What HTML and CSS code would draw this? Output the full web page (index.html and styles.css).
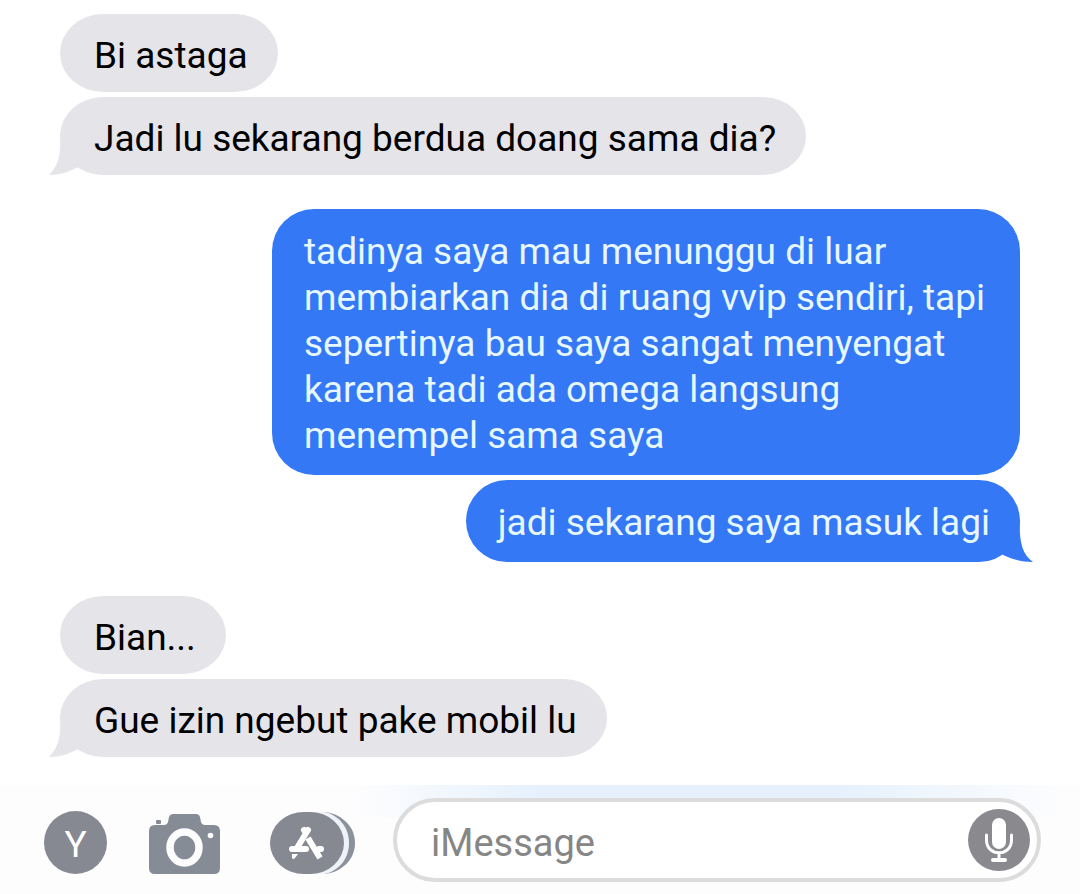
FILE: index.html
```html
<!DOCTYPE html>
<html lang="id">
<head>
  <meta charset="UTF-8" />
  <meta name="viewport" content="width=device-width, initial-scale=1.0"/>
  <title>iMessage</title>
  <link rel="stylesheet" href="styles.css">
</head>
<body>
  <main class="chat">
    <div class="group received">
      <p class="bubble">Bi astaga</p>
      <p class="bubble">Jadi lu sekarang berdua doang sama dia?
        <svg class="tail" viewBox="0 0 40 42" aria-hidden="true"><path d="M11 0C12 18 11 31 0 42C11 42 20 39 29 34L40 20V0Z"/></svg>
      </p>
    </div>

    <div class="group sent">
      <p class="bubble long">tadinya saya mau menunggu di luar membiarkan dia di ruang vvip sendiri, tapi sepertinya bau saya sangat menyengat karena tadi ada omega langsung menempel sama saya</p>
      <p class="bubble">jadi sekarang saya masuk lagi
        <svg class="tail" viewBox="0 0 40 42" aria-hidden="true"><path d="M27 0C26 18 28 34 40 42C28 42 19 39 10 35L0 20V0Z"/></svg>
      </p>
    </div>

    <div class="group received">
      <p class="bubble">Bian...</p>
      <p class="bubble">Gue izin ngebut pake mobil lu
        <svg class="tail" viewBox="0 0 40 42" aria-hidden="true"><path d="M11 0C12 18 11 31 0 42C11 42 20 39 29 34L40 20V0Z"/></svg>
      </p>
    </div>
  </main>

  <footer class="toolbar">
    <button class="avatar" type="button">Y</button>

    <button class="camera" type="button" aria-label="Kamera">
      <svg width="71" height="60" viewBox="0 0 71 60">
        <path fill="#868c96" d="M6 11H15Q18 11 19 8L20 3Q21 0 24 0H47Q50 0 51 3L52 8Q53 11 56 11H65Q71 11 71 17V54Q71 60 65 60H6Q0 60 0 54V17Q0 11 6 11Z"/>
        <rect x="7" y="6" width="5" height="4" rx="1" fill="#868c96"/>
        <ellipse cx="35.500" cy="33.500" rx="14.500" ry="15.500" fill="none" stroke="#fdfdfe" stroke-width="7.500"/>
        <circle cx="61.500" cy="21.500" r="2.800" fill="#fdfdfe"/>
      </svg>
    </button>

    <button class="apps" type="button" aria-label="Aplikasi">
      <svg width="85" height="62" viewBox="0 0 85 62">
        <path fill="#8b929c" d="M52 0H56C73 3 85 15 85 31S73 59 56 62H52Z"/>
        <path fill="#eef3fa" d="M48 0H55C70 4 79 16 79 31S70 58 55 62H48Z"/>
        <rect width="74" height="62" rx="34" ry="31" fill="#868892"/>
        <g fill="none" stroke="#fff" stroke-linecap="round">
          <path stroke-width="6" d="M38 18L27 36M34 18L36 21"/>
          <path stroke-width="6" d="M22 37H36M49 37H51"/>
          <path stroke-width="6" stroke-linecap="butt" d="M38 26L50 46"/>
        </g>
        <path fill="#fff" d="M22 42H28L25 46Q23 48 22 46Z"/>
      </svg>
    </button>

    <div class="field">
      <input type="text" placeholder="iMessage" aria-label="iMessage"/>
      <button class="mic" type="button" aria-label="Rekam suara">
        <svg width="62" height="62" viewBox="0 0 62 62">
          <rect x="24" y="9" width="14" height="31" rx="7" fill="#fff"/>
          <path fill="none" stroke="#fff" stroke-width="3" stroke-linecap="round" d="M18.500 26V31C18.500 48 43.500 48 43.500 31V26M31 44V50"/>
          <path stroke="#fff" stroke-width="4" stroke-linecap="round" d="M25 51H37"/>
        </svg>
      </button>
    </div>
  </footer>
</body>
</html>
```

FILE: styles.css
```css
* {
  box-sizing: border-box;
}
body {
  margin: 0;
  min-height: 100vh;
  display: flex;
  flex-direction: column;
  background: #fff;
  font-family: Roboto, "Liberation Sans", sans-serif;
  font-size: 37px;
  line-height: 46px;
}
.chat {
  flex: 1;
  display: flex;
  flex-direction: column;
  gap: 34px;
  padding: 14px 60px 28px;
}
.group {
  display: flex;
  flex-direction: column;
  gap: 5px;
}
.received {
  align-items: flex-start;
}
.sent {
  align-items: flex-end;
}
.bubble {
  position: relative;
  margin: 0;
  padding: 19px 30px 13px 34px;
  border-radius: 43px / 39px;
  background: #e5e4e9;
  color: #000;
}
.sent .bubble {
  padding: 20px 30px 16px 32px;
  border-radius: 42px;
  background: #3478f6;
  color: #e6f7ff;
}
.sent .long {
  max-width: 748px;
}
.tail {
  position: absolute;
  bottom: 0;
  left: -11px;
  width: 40px;
  height: 42px;
  fill: #e5e4e9;
}
.sent .tail {
  left: auto;
  right: -13px;
  fill: #3478f6;
}

/* bottom bar */
.toolbar {
  display: flex;
  align-items: flex-end;
  padding: 13px 39px 12px 44px;
  background: linear-gradient(90deg, #fdfdfe 33%, #e6f1fd 50%, #e6f1fd 78%, #fdfdfe 98%) top / 100% 32px no-repeat #fdfdfe;
}
button {
  flex: none;
  padding: 0;
  border: none;
  background: none;
  cursor: pointer;
}
button svg {
  display: block;
}
.toolbar > button {
  margin-bottom: 8px;
}
.avatar {
  width: 63px;
  height: 63px;
  margin-right: 42px;
  padding-top: 3px;
  border-radius: 50%;
  background: #868892;
  color: #fff;
  font-family: inherit;
  font-size: 37px;
}
.camera {
  margin-right: 50px;
}
.apps {
  margin-right: 38px;
}
.field {
  flex: 1;
  min-width: 0;
  height: 84px;
  display: flex;
  align-items: center;
  padding: 0 7px 0 34px;
  border: 4px solid #dcdcdd;
  border-radius: 42px;
  background: #fff;
}
.field input {
  flex: 1;
  min-width: 0;
  height: 60px;
  padding: 6px 0 0;
  border: none;
  outline: none;
  background: none;
  color: #000;
  font-family: inherit;
  font-size: 38px;
}
.field input::placeholder {
  color: #868686;
  opacity: 1;
}
.mic {
  border-radius: 50%;
  background: #8a898e;
}
```
